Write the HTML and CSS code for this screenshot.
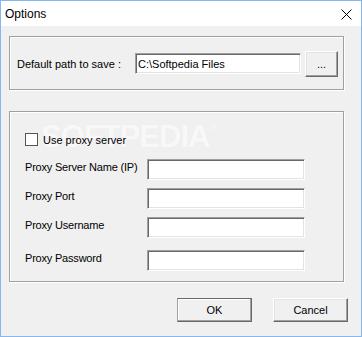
FILE: index.html
```html
<!DOCTYPE html>
<html lang="en">

<head>
    <meta charset="UTF-8">
    <meta name="viewport" content="width=device-width, initial-scale=1.0">
    <title>Options</title>
    <link rel="stylesheet" href="styles.css">
</head>

<body>
    <div class="window">
        <div class="titlebar">
            <span class="title">Options</span>
            <svg class="close" width="11" height="11" viewBox="0 0 11 11">
                <path d="M0.5 0.5 L10.5 10.5 M10.5 0.5 L0.5 10.5" stroke="#000" stroke-width="1" fill="none"/>
            </svg>
        </div>
        <div class="content">
            <div class="group path-group">
                <span class="path-label">Default path to save :</span>
                <input type="text" class="field path-field" value="C:\Softpedia Files">
                <button class="btn browse">...</button>
            </div>
            <div class="group proxy-group">
                <div class="check-row">
                    <span class="check-box"></span>
                    <span>Use proxy server</span>
                </div>
                <div class="row first">
                    <span class="row-label">Proxy Server Name (IP)</span>
                    <input type="text" class="field row-field">
                </div>
                <div class="row">
                    <span class="row-label">Proxy Port</span>
                    <input type="text" class="field row-field">
                </div>
                <div class="row">
                    <span class="row-label">Proxy Username</span>
                    <input type="text" class="field row-field">
                </div>
                <div class="row last">
                    <span class="row-label">Proxy Password</span>
                    <input type="password" class="field row-field">
                </div>
            </div>
            <div class="actions">
                <button class="btn action default">OK</button>
                <button class="btn action">Cancel</button>
            </div>
        </div>
        <div class="watermark">SOFTPEDIA<span class="reg">®</span></div>
    </div>
</body>

</html>
```

FILE: styles.css
```css
body {
    margin: 0;
    font-family: "Liberation Sans", Arial, sans-serif;
    font-size: 11px;
    color: #000;
}

.window {
    position: relative;
    width: 362px;
    height: 337px;
    box-sizing: border-box;
    border: 1px solid #86b7ee;
    background: #f0f0f0;
    overflow: hidden;
}

.titlebar {
    height: 25px;
    background: #fff;
    display: flex;
    align-items: center;
    justify-content: space-between;
    padding: 0 9px 0 4px;
}

.title {
    font-size: 12px;
    margin-top: 1px;
}

.close {
    margin-top: 1px;
}

.content {
    position: relative;
    z-index: 1;
    padding: 10px 0 0 8px;
}

.group {
    box-sizing: border-box;
    width: 335px;
    border: 1px solid #a0a0a0;
    box-shadow: inset 1px 1px 0 #fff, 1px 1px 0 #fff;
}

.path-group {
    height: 54px;
    display: flex;
    align-items: center;
    padding-left: 7px;
    padding-top: 1px;
}

.path-label {
    width: 118px;
}

.field {
    box-sizing: border-box;
    height: 21px;
    margin: 0;
    padding: 1px 2px 0;
    font-family: "Liberation Sans", Arial, sans-serif;
    font-size: 11px;
    color: #000;
    background: #fff;
    border: 1px solid;
    border-color: #a0a0a0 #fff #fff #a0a0a0;
    box-shadow: inset 1px 1px 0 #696969, inset -1px -1px 0 #e3e3e3;
    outline: none;
}

.path-field {
    width: 166px;
}

.btn {
    box-sizing: border-box;
    margin: 0;
    padding: 0;
    font-family: "Liberation Sans", Arial, sans-serif;
    font-size: 11px;
    color: #000;
    background: #f0f0f0;
    border: 1px solid;
    border-color: #fff #696969 #696969 #fff;
    box-shadow: inset -1px -1px 0 #a0a0a0, inset 1px 1px 0 #e3e3e3;
}

.browse {
    width: 33px;
    height: 26px;
    margin-left: 4px;
    margin-top: 1px;
}

.proxy-group {
    height: 171px;
    margin-top: 21px;
    padding: 21px 0 0 15px;
}

.check-row {
    display: flex;
    align-items: center;
    height: 13px;
}

.check-box {
    box-sizing: border-box;
    width: 13px;
    height: 13px;
    border: 1px solid #555;
    background: #fff;
    margin-right: 5px;
}

.row {
    display: flex;
    align-items: flex-start;
    margin-top: 8px;
}

.row.first {
    margin-top: 13px;
}

.row.last {
    margin-top: 12px;
}

.row-label {
    width: 122px;
    line-height: 13px;
    padding-top: 2px;
    letter-spacing: -0.2px;
}

.row-field {
    width: 158px;
}

.actions {
    display: flex;
    justify-content: flex-end;
    gap: 21px;
    margin-top: 16px;
    padding-right: 13px;
}

.action {
    width: 75px;
    height: 24px;
}

.action.default {
    border-color: #696969 #696969 #696969 #a0a0a0;
    box-shadow: inset -1px -1px 0 #a0a0a0, inset 1px 1px 0 #fff;
}

.watermark {
    position: absolute;
    z-index: 0;
    left: 40px;
    top: 118px;
    font-family: "Liberation Sans", Arial, sans-serif;
    font-weight: bold;
    font-size: 31px;
    letter-spacing: -1px;
    color: rgba(255, 255, 255, 0.8);
    text-shadow: 0 0 1px rgba(0, 0, 0, 0.06);
    pointer-events: none;
}

.watermark .reg {
    font-size: 10px;
    vertical-align: 16px;
    margin-left: 1px;
}
```
